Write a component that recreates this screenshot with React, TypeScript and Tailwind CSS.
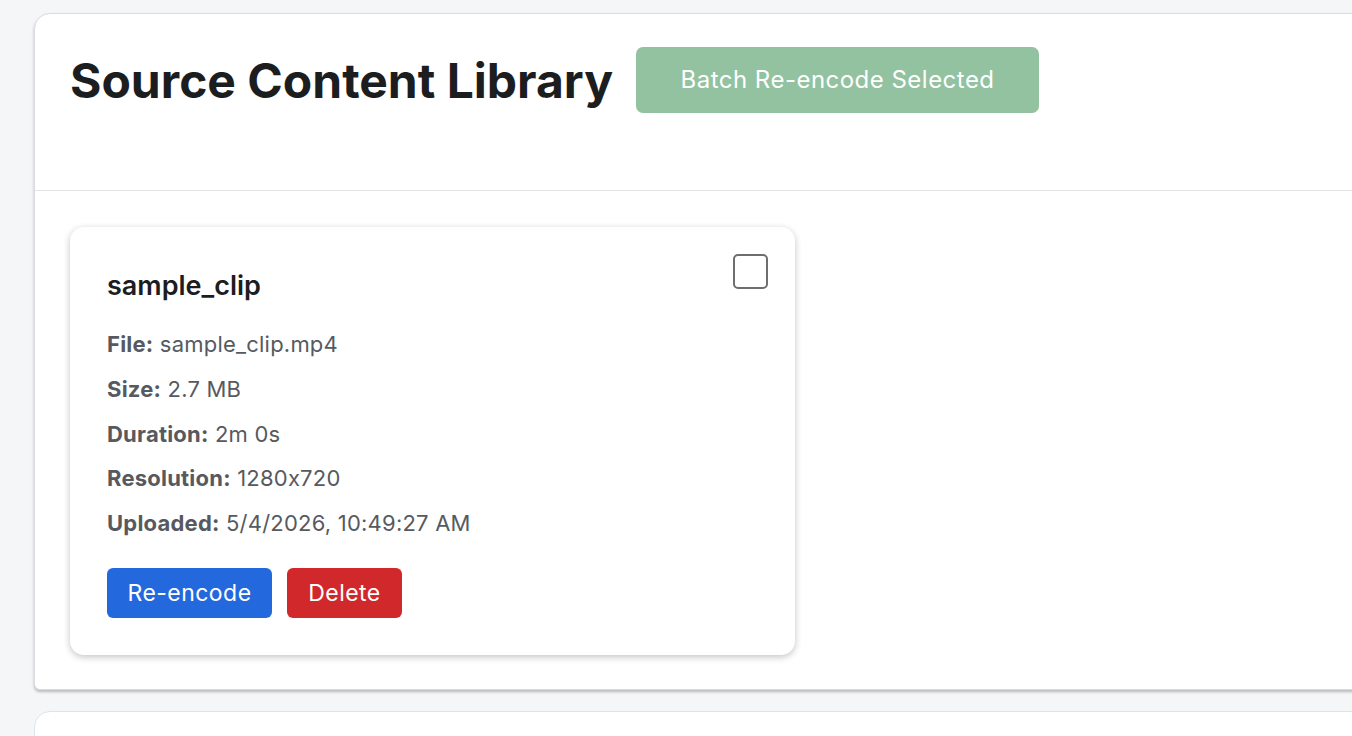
import React from 'react'

const FONT = { fontFamily: 'Inter, "Noto Sans", sans-serif' }

const DETAILS = [
  { label: 'File:', value: 'sample_clip.mp4' },
  { label: 'Size:', value: '2.7 MB' },
  { label: 'Duration:', value: '2m 0s' },
  { label: 'Resolution:', value: '1280x720' },
  { label: 'Uploaded:', value: '5/4/2026, 10:49:27 AM' },
]

function SourceCard() {
  return (
    <div className="w-[725px] rounded-[14px] bg-white shadow-[0_2px_7px_rgba(0,0,0,0.24)] pl-[37px] pr-[27px] pt-[27px] pb-[37px]">
      <div className="flex items-start justify-between">
        <h3 className="pt-[15px] text-[27px] font-semibold leading-[34px] text-[#1c1d1f]">sample_clip</h3>
        <div className="w-[35px] h-[35px] rounded-[5px] border-2 border-[#6e6e6e] bg-white" />
      </div>
      <div className="mt-[19px] flex flex-col text-[22px] leading-[44.75px] tracking-[0.01em] text-[#565a60] [font-feature-settings:'calt'_0]">
        {DETAILS.map((d) => (
          <div key={d.label}>
            <span className="font-bold">{d.label}</span> {d.value}
          </div>
        ))}
      </div>
      <div className="mt-[22px] flex gap-[15px]">
        <button className="h-[50px] w-[165px] rounded-[6px] bg-[#2468de] text-[23px] tracking-[0.02em] text-white">Re-encode</button>
        <button className="h-[50px] w-[115px] rounded-[6px] bg-[#d1292b] text-[23px] tracking-[0.02em] text-white">Delete</button>
      </div>
    </div>
  )
}

export default function App() {
  return (
    <div style={FONT} className="min-h-[736px] w-[1352px] overflow-hidden bg-[#f5f6f8] pl-[34px] pt-[13px]">
      <section className="w-[1360px] rounded-tl-[16px] rounded-bl-[6px] border border-[#dcdde0] bg-white shadow-[0_2px_3px_rgba(0,0,0,0.25)]">
        <header className="flex items-start gap-[23px] border-b border-[#e3e4e7] pl-[35px] pt-[33px] pb-[76px]">
          <h1 className="text-[48px] font-bold leading-[67px] text-[#1c1d1f]">Source Content Library</h1>
          <button className="h-[66px] w-[403px] rounded-[7px] bg-[#92c29f] text-[24px] tracking-[0.02em] text-white">Batch Re-encode Selected</button>
        </header>
        <div className="pl-[35px] pt-[36px] pb-[34px]">
          <SourceCard />
        </div>
      </section>
      <section className="mt-[21px] h-[40px] w-[1360px] rounded-tl-[16px] border border-[#dde3ee] bg-white" />
    </div>
  )
}
